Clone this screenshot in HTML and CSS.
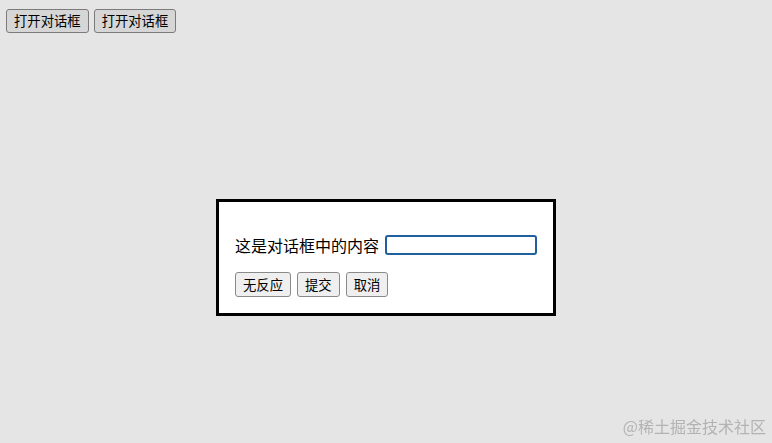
FILE: index.html
```html
<!DOCTYPE html>
<html lang="zh-CN">
<head>
    <meta charset="UTF-8">
    <meta name="viewport" content="width=device-width, initial-scale=1.0">
    <title>对话框</title>
    <link rel="stylesheet" href="styles.css">
</head>
<body>
    <div class="toolbar">
        <button class="btn">打开对话框</button>
        <button class="btn">打开对话框</button>
    </div>

    <div class="backdrop">
        <div class="dialog">
            <form class="dialog-form">
                <p class="field">
                    <span>这是对话框中的内容</span>
                    <input type="text" class="field-input">
                </p>
                <div class="actions">
                    <button type="button" class="btn">无反应</button>
                    <button type="button" class="btn">提交</button>
                    <button type="button" class="btn">取消</button>
                </div>
            </form>
        </div>
    </div>

    <div class="watermark">@稀土掘金技术社区</div>
</body>
</html>
```

FILE: styles.css
```css
body {
    margin: 0;
    padding: 0;
    background-color: #fff;
    font-family: "Noto Sans CJK SC", "Liberation Sans", sans-serif;
    color: #000;
}

.toolbar {
    display: flex;
    gap: 5px;
    padding: 9px 6px;
}

.btn {
    height: 24px;
    padding: 0 7px;
    font-family: "Noto Sans CJK SC", "Liberation Sans", sans-serif;
    font-size: 13.33px;
    line-height: 1;
    color: #000;
    background-color: #efefef;
    border: 1px solid #8a8a8a;
    border-radius: 3px;
    cursor: pointer;
}

.backdrop {
    position: fixed;
    inset: 0;
    display: flex;
    justify-content: center;
    align-items: flex-start;
    padding-top: 199px;
    background-color: rgba(0, 0, 0, 0.1);
}

.dialog {
    padding: 16px;
    background-color: #fff;
    border: 3px solid #000;
}

.dialog-form {
    margin: 0;
}

.field {
    display: flex;
    align-items: center;
    gap: 6px;
    height: 22px;
    margin: 16px 0;
    font-size: 16px;
}

.field-input {
    width: 152px;
    height: 20px;
    box-sizing: border-box;
    margin: 0;
    padding: 0 3px;
    border: 2px solid #1f5f9e;
    border-radius: 3px;
    outline: none;
}

.actions {
    display: flex;
    gap: 6px;
}

.actions .btn {
    height: 25px;
}

.watermark {
    position: fixed;
    right: 6px;
    bottom: 5px;
    font-size: 16px;
    color: #b3b3b3;
}
```
